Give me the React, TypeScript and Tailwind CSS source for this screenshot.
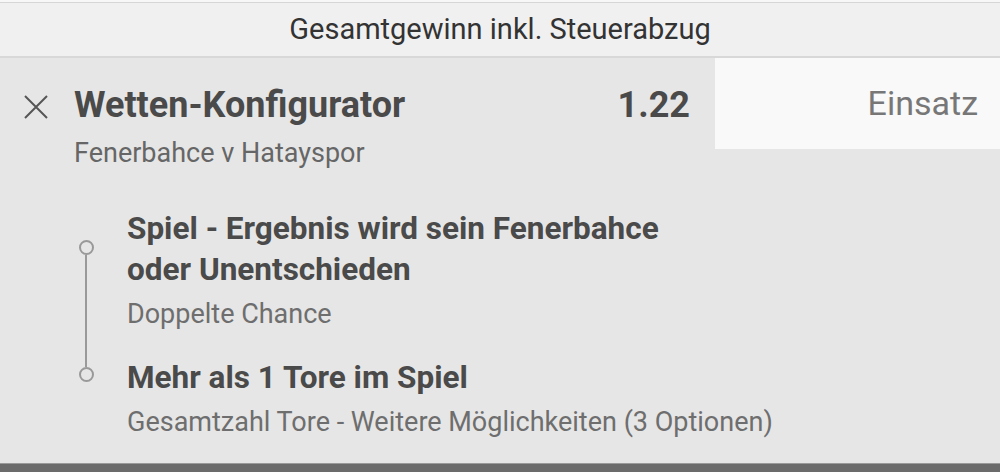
const Step = ({ title, sub }: { title: string[]; sub: string }) => (
  <div>
    {title.map((t) => (
      <div key={t} className="text-[31.5px] font-bold leading-[41px] text-[#4a4a4a]">{t}</div>
    ))}
    <div className="mt-[6px] text-[27px] leading-[36px] text-[#6e6e6e]">{sub}</div>
  </div>
);

const App = () => {
  return (
    <div className="h-[472px] w-[1000px] overflow-hidden bg-[#e6e6e6] font-['Roboto',sans-serif] flex flex-col">
      <div className="h-[3px] bg-[#f7f7f7] border-b border-[#d6d6d6]" />
      <div className="h-[55px] bg-[#f0f0f0] border-b-2 border-[#d8d8d8] flex items-center justify-center text-[29px] text-[#333]">
        Gesamtgewinn inkl. Steuerabzug
      </div>
      <div className="flex-1 flex flex-col">
        <div className="flex">
          <div className="flex-1 flex pt-[26px]">
            <svg className="mt-[10px] ml-[23px] h-[26px] w-[26px] shrink-0" viewBox="0 0 26 26" fill="none" stroke="#555" strokeWidth="2">
              <path d="M2 2L24 24M24 2L2 24" />
            </svg>
            <div className="ml-[25px] flex-1">
              <div className="flex items-center justify-between pr-[25px]">
                <span className="text-[36px] font-bold leading-[42px] text-[#4a4a4a]">Wetten-Konfigurator</span>
                <span className="text-[36px] font-bold leading-[42px] text-[#4a4a4a]">1.22</span>
              </div>
              <div className="mt-[9px] text-[27px] leading-[36px] text-[#666]">Fenerbahce v Hatayspor</div>
            </div>
          </div>
          <div className="w-[285px] h-[91px] bg-[#f9f9f9] flex items-center justify-end pr-[22px] text-[34px] text-[#777]">
            Einsatz
          </div>
        </div>
        <div className="mt-[37px] flex">
          <div className="ml-[78px] w-[16px] flex flex-col items-center pt-[32px]">
            <div className="h-[15px] w-[15px] rounded-full border-2 border-[#999]" />
            <div className="h-[112px] w-[2px] bg-[#999]" />
            <div className="h-[15px] w-[15px] rounded-full border-2 border-[#999]" />
          </div>
          <div className="ml-[33px] flex flex-col gap-[25px]">
            <Step title={["Spiel - Ergebnis wird sein Fenerbahce", "oder Unentschieden"]} sub="Doppelte Chance" />
            <Step title={["Mehr als 1 Tore im Spiel"]} sub="Gesamtzahl Tore - Weitere Möglichkeiten (3 Optionen)" />
          </div>
        </div>
      </div>
      <div className="h-[9px] bg-[#6b6b6b] border-t border-[#9a9a9a]" />
    </div>
  );
};

export default App;
